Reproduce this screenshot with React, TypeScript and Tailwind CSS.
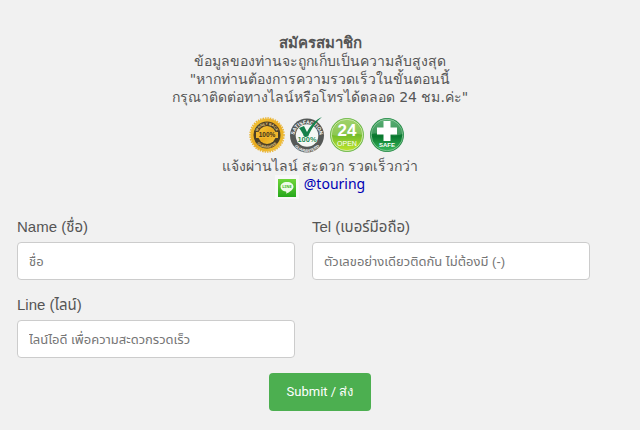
type FieldProps = {
  id: string;
  label: string;
  placeholder: string;
  type?: string;
};

function Field({ id, label, placeholder, type = "text" }: FieldProps) {
  return (
    <div className="flex flex-col">
      <label
        htmlFor={id}
        className="mb-[3px] text-[15px] leading-6 text-[#555555]"
      >
        {label}
      </label>
      <input
        id={id}
        name={id}
        type={type}
        placeholder={placeholder}
        className="h-[38px] w-full rounded border border-[#cccccc] bg-white px-[11px] text-[13px] text-[#555555] placeholder:text-[#757575]"
      />
    </div>
  );
}

function MoneyBackBadge() {
  return (
    <svg viewBox="0 0 36 36" className="size-9" role="img" aria-label="Money back guarantee">
      <defs>
        <linearGradient id="gold" x1="0" y1="0" x2="1" y2="1">
          <stop offset="0" stopColor="#f6c93c" />
          <stop offset="0.5" stopColor="#e9a91c" />
          <stop offset="1" stopColor="#f3c83f" />
        </linearGradient>
        <path id="goldTop" d="M8 18a10 10 0 0 1 20 0" />
        <path id="goldBottom" d="M5 18a13 13 0 0 0 26 0" />
      </defs>
      <circle cx="18" cy="18" r="16.6" fill="url(#gold)" />
      <circle cx="18" cy="18" r="17" fill="none" stroke="#e8b436" strokeWidth="1.5" strokeDasharray="1.5 1" />
      <circle cx="18" cy="18" r="13.5" fill="#4b4026" />
      <circle cx="18" cy="18" r="9" fill="url(#gold)" />
      <path d="M7 15h22v6H7z" fill="#efb62c" />
      <text x="18" y="20.3" textAnchor="middle" fontSize="6.5" fontWeight="700" fill="#3f3318">100%</text>
      <text fontSize="3.5" fontWeight="700" fill="#f0d68a">
        <textPath href="#goldTop" startOffset="50%" textAnchor="middle">MONEY BACK</textPath>
      </text>
      <text fontSize="3.5" fontWeight="700" fill="#f0d68a">
        <textPath href="#goldBottom" startOffset="50%" textAnchor="middle">GUARANTEE</textPath>
      </text>
    </svg>
  );
}

function SatisfactionBadge() {
  return (
    <svg viewBox="0 0 36 36" className="size-9" role="img" aria-label="Satisfaction guaranteed">
      <defs>
        <path id="satTop" d="M5.5 21a12.6 12.6 0 1 1 25 0" />
        <path id="satBottom" d="M2 19a16 16 0 0 0 32 0" />
      </defs>
      <circle cx="18" cy="18.5" r="17" fill="#555957" />
      <circle cx="18" cy="18.5" r="11.3" fill="#f4f7f4" />
      <text fontSize="5" fontWeight="700" fill="#ffffff">
        <textPath href="#satTop" startOffset="50%" textAnchor="middle">SATISFACTION</textPath>
      </text>
      <text fontSize="4" fontWeight="700" fill="#ffffff">
        <textPath href="#satBottom" startOffset="50%" textAnchor="middle">GUARANTEED</textPath>
      </text>
      <path d="M10 11l5-2 3 6C21 9 26 3 33 0c-6 5-11 12-14 20h-4c-1-4-3-6-5-9z" fill="#15804b" />
      <text x="18" y="24.5" textAnchor="middle" fontSize="7.5" fontWeight="700" fill="#178750" stroke="#ffffff" strokeWidth="1" paintOrder="stroke">100%</text>
    </svg>
  );
}

function OpenBadge() {
  return (
    <svg viewBox="0 0 36 36" className="size-9" role="img" aria-label="Open 24 hours">
      <defs>
        <linearGradient id="lime" x1="0" y1="0" x2="0" y2="1">
          <stop offset="0" stopColor="#8cc84a" />
          <stop offset="0.5" stopColor="#73bc2c" />
          <stop offset="1" stopColor="#bfe52a" />
        </linearGradient>
      </defs>
      <circle cx="18" cy="18" r="17" fill="#6fba48" />
      <circle cx="18" cy="18" r="15.7" fill="url(#lime)" stroke="#dff0c4" strokeWidth="0.8" />
      <path d="M3 18a15 15 0 0 1 30 0c-8-4-20 3-30 0z" fill="#ffffff" opacity="0.18" />
      <text x="18" y="18.5" textAnchor="middle" fontSize="17" fontWeight="700" fill="#ffffff">24</text>
      <text x="18" y="29" textAnchor="middle" fontSize="7" fill="#ffffff">OPEN</text>
    </svg>
  );
}

function SafeBadge() {
  return (
    <svg viewBox="0 0 36 36" className="size-9" role="img" aria-label="Safe">
      <defs>
        <linearGradient id="green" x1="0" y1="0" x2="0" y2="1">
          <stop offset="0" stopColor="#2f9b50" />
          <stop offset="0.55" stopColor="#08782e" />
          <stop offset="1" stopColor="#38b85a" />
        </linearGradient>
      </defs>
      <circle cx="18" cy="18" r="17" fill="#258c47" />
      <circle cx="18" cy="18" r="15.8" fill="url(#green)" stroke="#9bd3a9" strokeWidth="0.7" />
      <path d="M3 17a15 15 0 0 1 30 0c-9 4-20-2-30 0z" fill="#ffffff" opacity="0.2" />
      <path d="M14.5 4h7v6.500H28v7h-6.500V24h-7v-6.500H8v-7h6.500z" fill="#ffffff" />
      <text x="18" y="30" textAnchor="middle" fontSize="6" fontWeight="700" fill="#ffffff">SAFE</text>
    </svg>
  );
}

function LineLogo() {
  return (
    <svg viewBox="0 0 24 24" className="size-6" role="img" aria-label="LINE">
      <defs>
        <linearGradient id="line" x1="0" y1="0" x2="0" y2="1">
          <stop offset="0" stopColor="#6fd63a" />
          <stop offset="1" stopColor="#27a81c" />
        </linearGradient>
      </defs>
      <path d="M0 0h24v24H0z" fill="#f8f8f8" />
      <path d="M3 4h18v18H3z" fill="url(#line)" />
      <path d="M12 7c-4 0-6.500 2.100-6.500 4.800 0 2.500 2.100 4.300 5.300 4.800.8.200.5 1 .4 2.200 3.300-1.600 7.300-4.100 7.300-7 0-2.700-2.500-4.800-6.500-4.800z" fill="#f0fbe9" />
      <text x="12" y="13.4" textAnchor="middle" fontSize="4" fontWeight="700" fill="#3bb526">LINE</text>
    </svg>
  );
}

export default function App() {
  return (
    <main className="min-h-screen bg-[#f1f1f1] pt-[34px] pb-[19px] font-['Liberation_Sans','Noto_Sans_Thai',sans-serif]">
      {/* Intro */}
      <header className="flex flex-col items-center text-center font-['DejaVu_Sans',sans-serif] text-[14px] leading-[18px] text-[#555555]">
        <h1 className="text-[15px] leading-[18px] font-bold">สมัครสมาชิก</h1>
        <p>
          ข้อมูลของท่านจะถูกเก็บเป็นความลับสูงสุด
          <br />
          "หากท่านต้องการความรวดเร็วในขั้นตอนนี้
          <br />
          กรุณาติดต่อทางไลน์หรือโทรได้ตลอด 24 ชม.ค่ะ"
        </p>
        <div className="mt-[11px] flex gap-1 pl-[14px] font-['Liberation_Sans',sans-serif]">
          <MoneyBackBadge />
          <SatisfactionBadge />
          <OpenBadge />
          <SafeBadge />
        </div>
        <p className="mt-1">แจ้งผ่านไลน์ สะดวก รวดเร็วกว่า</p>
        <a href="#line-id" className="flex gap-[5px] font-['Noto_Sans',sans-serif] text-[14px] text-[#0000b4]">
          <LineLogo />
          @touring
        </a>
      </header>

      {/* Sign up form */}
      <form className="mt-4">
        <div className="grid grid-cols-2 gap-x-[17px] gap-y-[13px] pr-[50px] pl-[17px]">
          <Field id="name" label="Name (ชื่อ)" placeholder="ชื่อ" />
          <Field
            id="tel"
            type="tel"
            label="Tel (เบอร์มือถือ)"
            placeholder="ตัวเลขอย่างเดียวติดกัน ไม่ต้องมี (-)"
          />
          <Field id="line-id" label="Line (ไลน์)" placeholder="ไลน์ไอดี เพื่อความสะดวกรวดเร็ว" />
        </div>
        <div className="mt-[15px] flex justify-center">
          <button type="submit" className="h-[38px] rounded bg-[#4caf50] px-[18px] font-['Roboto',sans-serif] text-[13px] text-white">
            Submit / ส่ง
          </button>
        </div>
      </form>
    </main>
  );
}
